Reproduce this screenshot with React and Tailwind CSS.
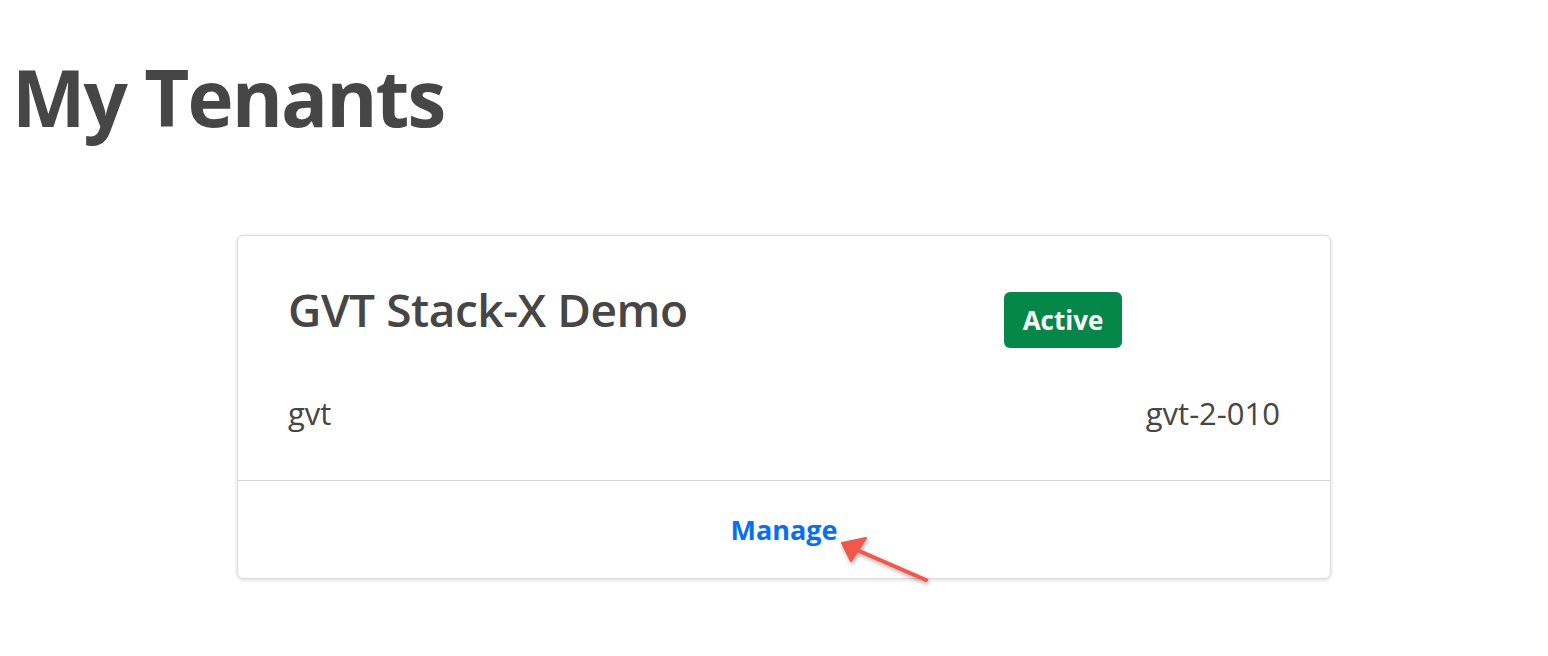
import React from "react";

export default function App() {
  return (
    <div className="relative w-[1548px] h-[656px] bg-white overflow-hidden font-['Open_Sans',sans-serif] text-[#464646]">
      <h1 className="pl-[12px] pt-[58px] text-[78px] leading-none font-bold tracking-[-0.025em]">My Tenants</h1>

      <div className="ml-[237px] mt-[99px] w-[1094px] rounded-md border border-[#dcdcdc] bg-white shadow-[0_1px_4px_rgba(0,0,0,0.14)]">
        <div className="px-[50px] pt-[50px] pb-[51px]">
          <div className="flex items-start">
            <div className="w-[716px] text-[46px] leading-none font-semibold tracking-[-0.01em]">GVT Stack-X Demo</div>
            <div className="mt-[6px] flex h-[56px] w-[118px] items-center justify-center rounded-md bg-[#05874a] text-[26px] font-bold text-white leading-none">
              Active
            </div>
          </div>
          <div className="mt-[50px] flex justify-between text-[31px] leading-none">
            <span>gvt</span>
            <span>gvt-2-010</span>
          </div>
        </div>
        <div className="flex h-[98px] items-center justify-center border-t border-[#d4d4d4]">
          <a className="text-[27px] leading-none font-bold text-[#0a6ef2]">Manage</a>
        </div>
      </div>

      <svg
        className="pointer-events-none absolute left-0 top-0 drop-shadow-[1px_2px_2px_rgba(0,0,0,0.35)]"
        width="1548"
        height="656"
        viewBox="0 0 1548 656"
      >
        <line x1="857" y1="550" x2="926" y2="580" stroke="#f1574a" strokeWidth="4" strokeLinecap="round" />
        <polygon points="842,543 866,538 851,561" fill="#f1574a" stroke="#f1574a" strokeWidth="2" strokeLinejoin="round" />
      </svg>
    </div>
  );
}
